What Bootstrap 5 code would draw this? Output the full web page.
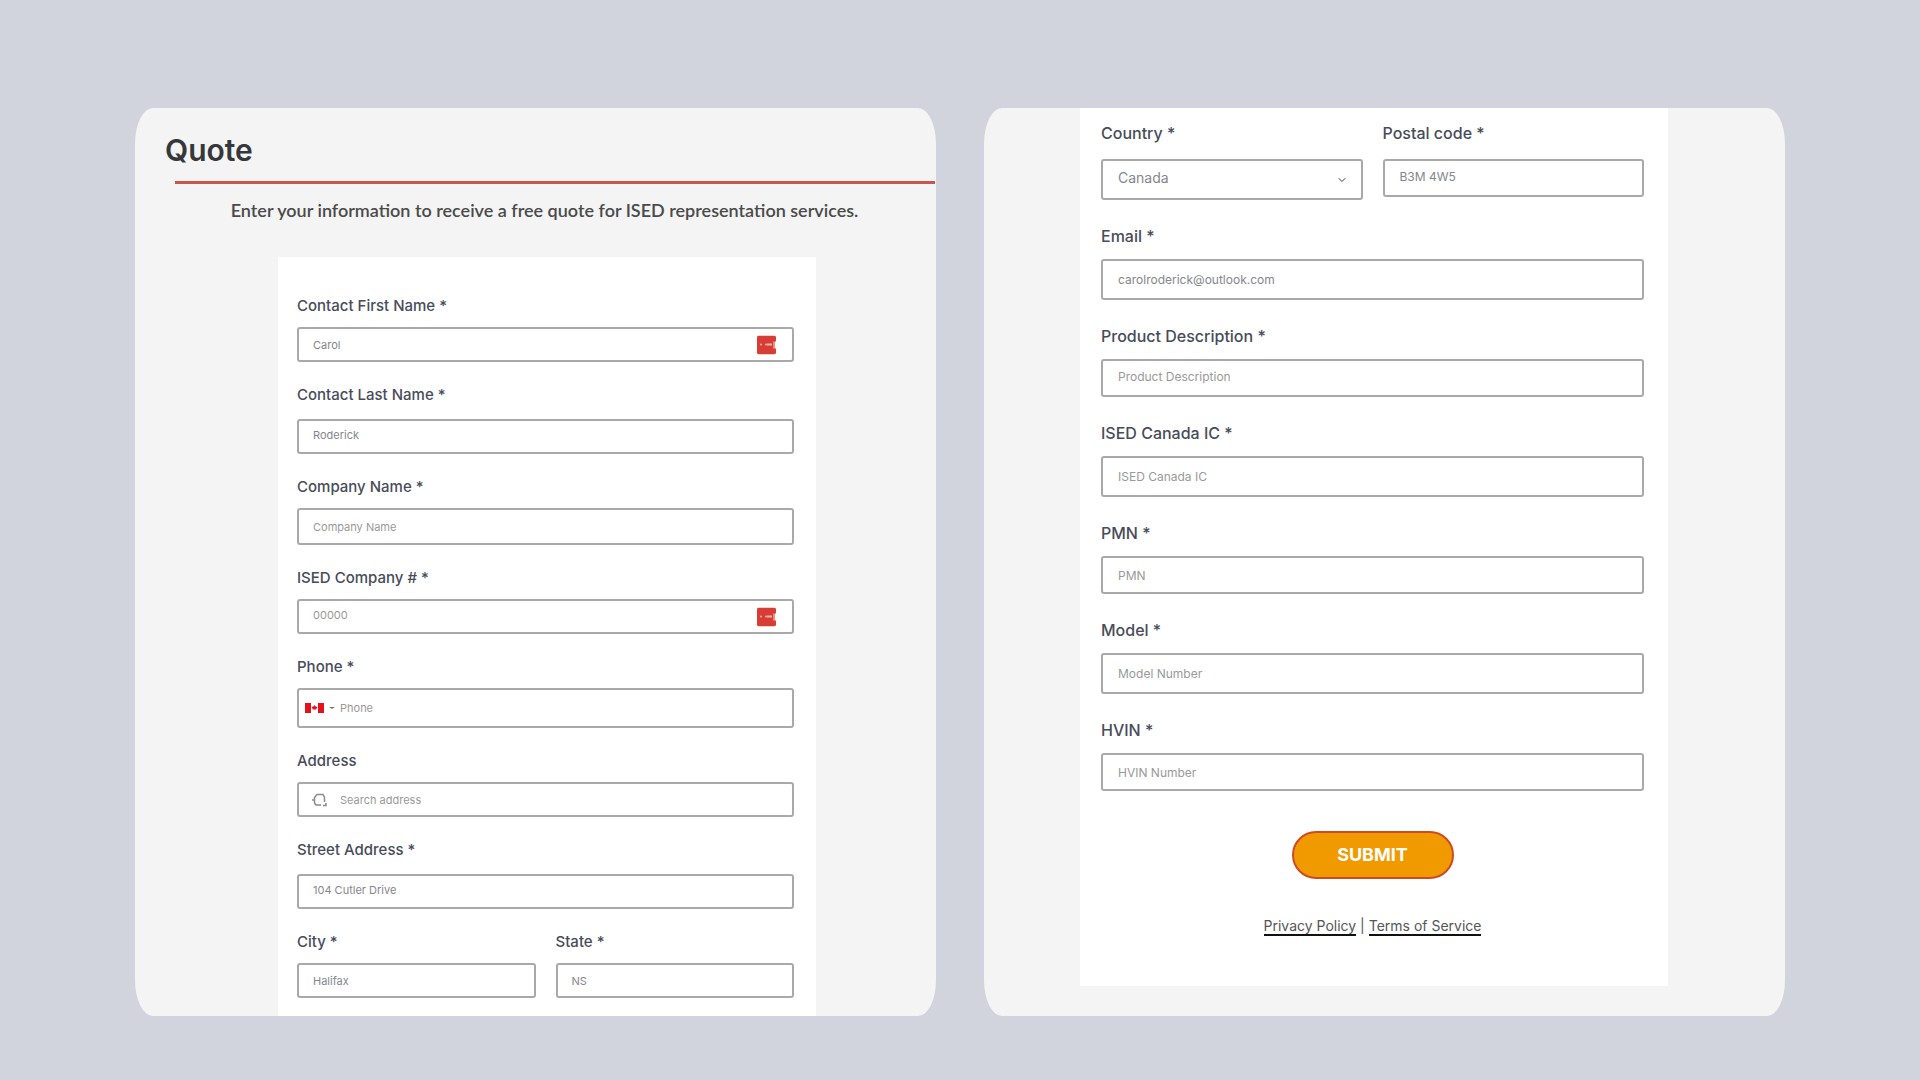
<!DOCTYPE html>
<html lang="en">
<head>
<meta charset="utf-8">
<meta name="viewport" content="width=device-width, initial-scale=1">
<title>Quote</title>
<link href="https://cdn.jsdelivr.net/npm/bootstrap@5.3.0/dist/css/bootstrap.min.css" rel="stylesheet">
<style>
  body { background: #d1d4dd; font-family: Inter, "Open Sans", sans-serif; color: #3b3f4a; }
  .board { padding: 108px 135px 64px; gap: 48px; }
  .pane { flex: 1 1 0; min-width: 0; background: #f4f4f4; border-radius: 18px / 36px; overflow: hidden; }
  .pane-title { margin: 25px 0 14px 30px; font-size: 30px; line-height: 34px; font-weight: 600; color: #35383b; }
  .pane-rule { height: 3px; margin: 0 1px 0 40px; background: #c6564f; border: 0; opacity: 1; }
  .intro { margin: 14px 0 35px 18px; font: 600 18px/24px Lato, sans-serif; color: #4a4a4a; text-align: center; }
  .sheet { background: #fff; }
  .sheet-start { margin: 0 120px 0 143px; padding: 39px 22px 18px 19px; }
  .sheet-end { margin: 0 117px 29px 96px; padding: 15px 24px 50px 21px; }
  .stack { display: flex; flex-direction: column; gap: 23px; }
  .sheet-end .stack { gap: 26px; }
  .pair { display: flex; gap: 20px; align-items: flex-start; }
  .pair > div { flex: 1 1 0; min-width: 0; }
  .field-label { display: block; font-size: 15px; line-height: 20px; font-weight: 500; margin-bottom: 11px; color: #484b59; }
  .roomy > .field-label { margin-bottom: 14px; }
  .sheet-end .field-label { margin-bottom: 13px; font-size: 16px; }
  .sheet-end .roomy > .field-label { margin-bottom: 16px; }
  .form-control, .form-select { height: 35px; padding: 0 14px; border: 2px solid #a9a9a9; border-radius: 3px; font-size: 11px; line-height: 16px; color: #85868d; background-color: #fff; }
  .form-control::placeholder { color: #999; opacity: 1; }
  .form-control.raised, .form-select.raised { padding-bottom: 4px; }
  .form-control.mid { height: 38px; }
  .form-control.tall, .form-select.tall { height: 41px; }
  .sheet-start .form-control.mid { height: 37px; }
  .sheet-start .form-control.tall { height: 40px; }
  .form-control.inset { padding-left: 41px; }
  .sheet-end .form-control { font-size: 12px; padding-left: 15px; }
  .form-select { font-size: 14px; padding-left: 15px; background-position: right 15px center; background-size: 8px 8px; }
  .adorn { position: absolute; top: 50%; transform: translateY(-50%); display: block; }
  .adorn-key { right: 18px; }
  .adorn-flag { left: 8px; }
  .adorn-find { left: 15px; }
  .submit-btn { display: block; width: 162px; height: 48px; margin: 40px auto 0; padding: 0; border: 2px solid #cf4a24; border-radius: 24px; background: #f09a00; color: #fff; font-size: 18px; font-weight: 700; line-height: 24px; }
  .legal { margin: 37px 0 0; font-size: 14px; line-height: 20px; text-align: center; color: #555; }
  .legal a { color: #555; text-decoration: none; border-bottom: 2px solid #111; }
  @media (max-width: 1199px) {
    .board { padding: 32px 24px; }
    .sheet-start, .sheet-end { margin-left: 24px; margin-right: 24px; }
  }
</style>
</head>
<body>
<main class="board d-flex flex-column flex-lg-row">
  <section class="pane">
    <h1 class="pane-title">Quote</h1>
    <hr class="pane-rule">
    <p class="intro">Enter your information to receive a free quote for ISED representation services.</p>
    <form class="sheet sheet-start">
      <div class="stack">
        <div>
          <label class="field-label" for="first">Contact First Name *</label>
          <div class="position-relative">
            <input class="form-control" id="first" type="text" value="Carol">
            <svg class="adorn adorn-key" width="19" height="19" viewBox="0 0 19 19" aria-hidden="true"><path d="M2 0h15a2 2 0 0 1 2 2v3l-1 2v5l1 2v3a2 2 0 0 1-2 2H2a2 2 0 0 1-2-2V2a2 2 0 0 1 2-2z" fill="#d73c35"/><g fill="#f3b5b0"><circle cx="4" cy="9" r="1"/><circle cx="9" cy="9" r="1"/><path d="M10 8h5v2h-5z"/></g><path d="M17 6v7" stroke="#fbe3e1"/></svg>
          </div>
        </div>
        <div class="roomy">
          <label class="field-label" for="last">Contact Last Name *</label>
          <input class="form-control raised" id="last" type="text" value="Roderick">
        </div>
        <div>
          <label class="field-label" for="company">Company Name *</label>
          <input class="form-control mid" id="company" type="text" placeholder="Company Name">
        </div>
        <div>
          <label class="field-label" for="number">ISED Company # *</label>
          <div class="position-relative">
            <input class="form-control raised" id="number" type="text" placeholder="00000">
            <svg class="adorn adorn-key" width="19" height="19" viewBox="0 0 19 19" aria-hidden="true"><path d="M2 0h15a2 2 0 0 1 2 2v3l-1 2v5l1 2v3a2 2 0 0 1-2 2H2a2 2 0 0 1-2-2V2a2 2 0 0 1 2-2z" fill="#d73c35"/><g fill="#f3b5b0"><circle cx="4" cy="9" r="1"/><circle cx="9" cy="9" r="1"/><path d="M10 8h5v2h-5z"/></g><path d="M17 6v7" stroke="#fbe3e1"/></svg>
          </div>
        </div>
        <div>
          <label class="field-label" for="phone">Phone *</label>
          <div class="position-relative">
            <input class="form-control tall inset" id="phone" type="tel" placeholder="Phone">
            <svg class="adorn adorn-flag" width="30" height="10" viewBox="0 0 30 10" aria-hidden="true"><path d="M0 0h6v10H0zM13 0h6v10h-6z" fill="#e3121b"/><path d="M9.500 2l1 1.500 2 .5-1.500 2.500h-3L6.500 4l2-.5z" fill="#e3121b"/><path d="M24 4h6l-3 2z" fill="#6d7b70"/></svg>
          </div>
        </div>
        <div>
          <label class="field-label" for="address">Address</label>
          <div class="position-relative">
            <input class="form-control inset" id="address" type="search" placeholder="Search address">
            <svg class="adorn adorn-find" width="15" height="14" viewBox="0 0 15 14" fill="none" stroke="#858b98" stroke-width="1.500" aria-hidden="true"><path d="M9 12H4L2.500 10V4.500L5 1.500h6l1.500 3V9M11 12.500h3V10M0 7h3"/></svg>
          </div>
        </div>
        <div class="roomy">
          <label class="field-label" for="street">Street Address *</label>
          <input class="form-control raised" id="street" type="text" value="104 Cutler Drive">
        </div>
        <div class="pair">
          <div>
            <label class="field-label" for="city">City *</label>
            <input class="form-control" id="city" type="text" value="Halifax">
          </div>
          <div>
            <label class="field-label" for="state">State *</label>
            <input class="form-control" id="state" type="text" value="NS">
          </div>
        </div>
      </div>
    </form>
  </section>

  <section class="pane">
    <form class="sheet sheet-end">
      <div class="stack">
        <div class="pair">
          <div class="roomy">
            <label class="field-label" for="country">Country *</label>
            <select class="form-select tall raised" id="country"><option>Canada</option></select>
          </div>
          <div class="roomy">
            <label class="field-label" for="postal">Postal code *</label>
            <input class="form-control mid raised" id="postal" type="text" value="B3M 4W5">
          </div>
        </div>
        <div>
          <label class="field-label" for="email">Email *</label>
          <input class="form-control tall" id="email" type="email" value="carolroderick@outlook.com">
        </div>
        <div>
          <label class="field-label" for="product">Product Description *</label>
          <input class="form-control mid raised" id="product" type="text" placeholder="Product Description">
        </div>
        <div>
          <label class="field-label" for="ic">ISED Canada IC *</label>
          <input class="form-control tall" id="ic" type="text" placeholder="ISED Canada IC">
        </div>
        <div>
          <label class="field-label" for="pmn">PMN *</label>
          <input class="form-control mid" id="pmn" type="text" placeholder="PMN">
        </div>
        <div>
          <label class="field-label" for="model">Model *</label>
          <input class="form-control tall" id="model" type="text" placeholder="Model Number">
        </div>
        <div>
          <label class="field-label" for="hvin">HVIN *</label>
          <input class="form-control mid" id="hvin" type="text" placeholder="HVIN Number">
        </div>
      </div>
      <button class="submit-btn" type="submit">SUBMIT</button>
      <p class="legal"><a href="#">Privacy Policy</a> | <a href="#">Terms of Service</a></p>
    </form>
  </section>
</main>
<script src="https://cdn.jsdelivr.net/npm/bootstrap@5.3.0/dist/js/bootstrap.bundle.min.js"></script>
</body>
</html>
